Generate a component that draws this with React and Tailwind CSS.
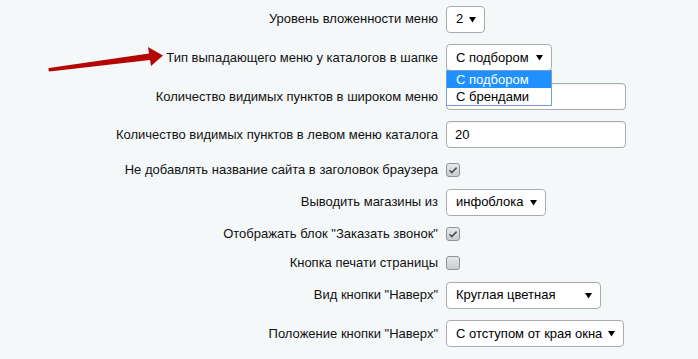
import React from "react";

const rows = [
  { label: "Уровень вложенности меню", h: "h-[38px]", kind: "select", value: "2", w: "w-[39px]" },
  { label: "Тип выпадающего меню у каталогов в шапке", h: "h-[39px]", kind: "select", value: "С подбором", w: "w-[106px]", open: true },
  { label: "Количество видимых пунктов в широком меню", h: "h-[39px]", kind: "input", value: "" },
  { label: "Количество видимых пунктов в левом меню каталога", h: "h-[37px]", kind: "input", value: "20" },
  { label: "Не добавлять название сайта в заголовок браузера", h: "h-[33px]", kind: "check", checked: true },
  { label: "Выводить магазины из", h: "h-[32px]", kind: "select", value: "инфоблока", w: "w-[100px]" },
  { label: "Отображать блок \"Заказать звонок\"", h: "h-[31px]", kind: "check", checked: true },
  { label: "Кнопка печати страницы", h: "h-[27px]", kind: "check", checked: false },
  { label: "Вид кнопки \"Наверх\"", h: "h-[38px]", kind: "select", value: "Круглая цветная", w: "w-[155px]" },
  { label: "Положение кнопки \"Наверх\"", h: "h-[39px]", kind: "select", value: "С отступом от края окна", w: "w-[178px]" },
];

function Caret() {
  return (
    <svg width="7" height="7" viewBox="0 0 7 7" className="shrink-0">
      <path d="M0 1h7L3.5 6.5z" fill="#000" />
    </svg>
  );
}

function Select({ value, w, open }) {
  return (
    <div className="relative">
      <div
        className={`${w} flex h-[27px] items-center justify-between rounded-[4px] border border-[#a9acaf] bg-white pl-[9px] pr-[8px] text-[13px] text-black`}
      >
        <span className="whitespace-nowrap">{value}</span>
        <Caret />
      </div>
      {open ? (
        <div className="absolute left-0 top-[26px] z-10 w-[106px] border border-[#7a9cd3] bg-white text-[13px]">
          <div className="h-[17px] bg-[#1e90ff] pl-[9px] leading-[17px] text-white">С подбором</div>
          <div className="h-[17px] pl-[9px] leading-[17px] text-black">С брендами</div>
        </div>
      ) : null}
    </div>
  );
}

function Input({ value }) {
  return (
    <div className="flex h-[27px] w-[180px] items-center rounded-[4px] border border-[#a9acaf] bg-white pl-[8px] text-[13px] text-black shadow-[inset_0_1px_1px_rgba(0,0,0,0.06)]">
      {value}
    </div>
  );
}

function Check({ checked }) {
  return (
    <div className="flex h-[14px] w-[14px] items-center justify-center rounded-[3px] border border-[#8e9398] bg-gradient-to-b from-[#e6e9ec] to-[#c9cdd1]">
      {checked ? (
        <svg width="10" height="10" viewBox="0 0 10 10">
          <path d="M1.5 5.2l2.3 2.3L8.6 2.6" fill="none" stroke="#4a4f55" strokeWidth="1.6" />
        </svg>
      ) : null}
    </div>
  );
}

export default function App() {
  return (
    <div className="relative h-[359px] w-[698px] overflow-hidden bg-[#f5f8f9] font-['Liberation_Sans',Arial,sans-serif]">
      {/* red pointer arrow */}
      <svg className="absolute left-0 top-0" width="180" height="80" viewBox="0 0 180 80">
        <path
          d="M49.5 71.5L150 60L151 66L163 55.5L148 47L149 53.5L49 68Q47.5 70 49.5 71.5z"
          fill="#b50606"
        />
      </svg>

      <div className="flex flex-col">
        {rows.map((row, i) => (
          <div key={i} className={`flex ${row.h} items-center`}>
            <div className="w-[438px] shrink-0 text-right text-[13px] text-[#111]">{row.label}</div>
            <div className="ml-[8px] flex items-center">
              {row.kind === "select" ? <Select value={row.value} w={row.w} open={row.open} /> : null}
              {row.kind === "input" ? <Input value={row.value} /> : null}
              {row.kind === "check" ? <Check checked={row.checked} /> : null}
            </div>
          </div>
        ))}
      </div>
    </div>
  );
}
